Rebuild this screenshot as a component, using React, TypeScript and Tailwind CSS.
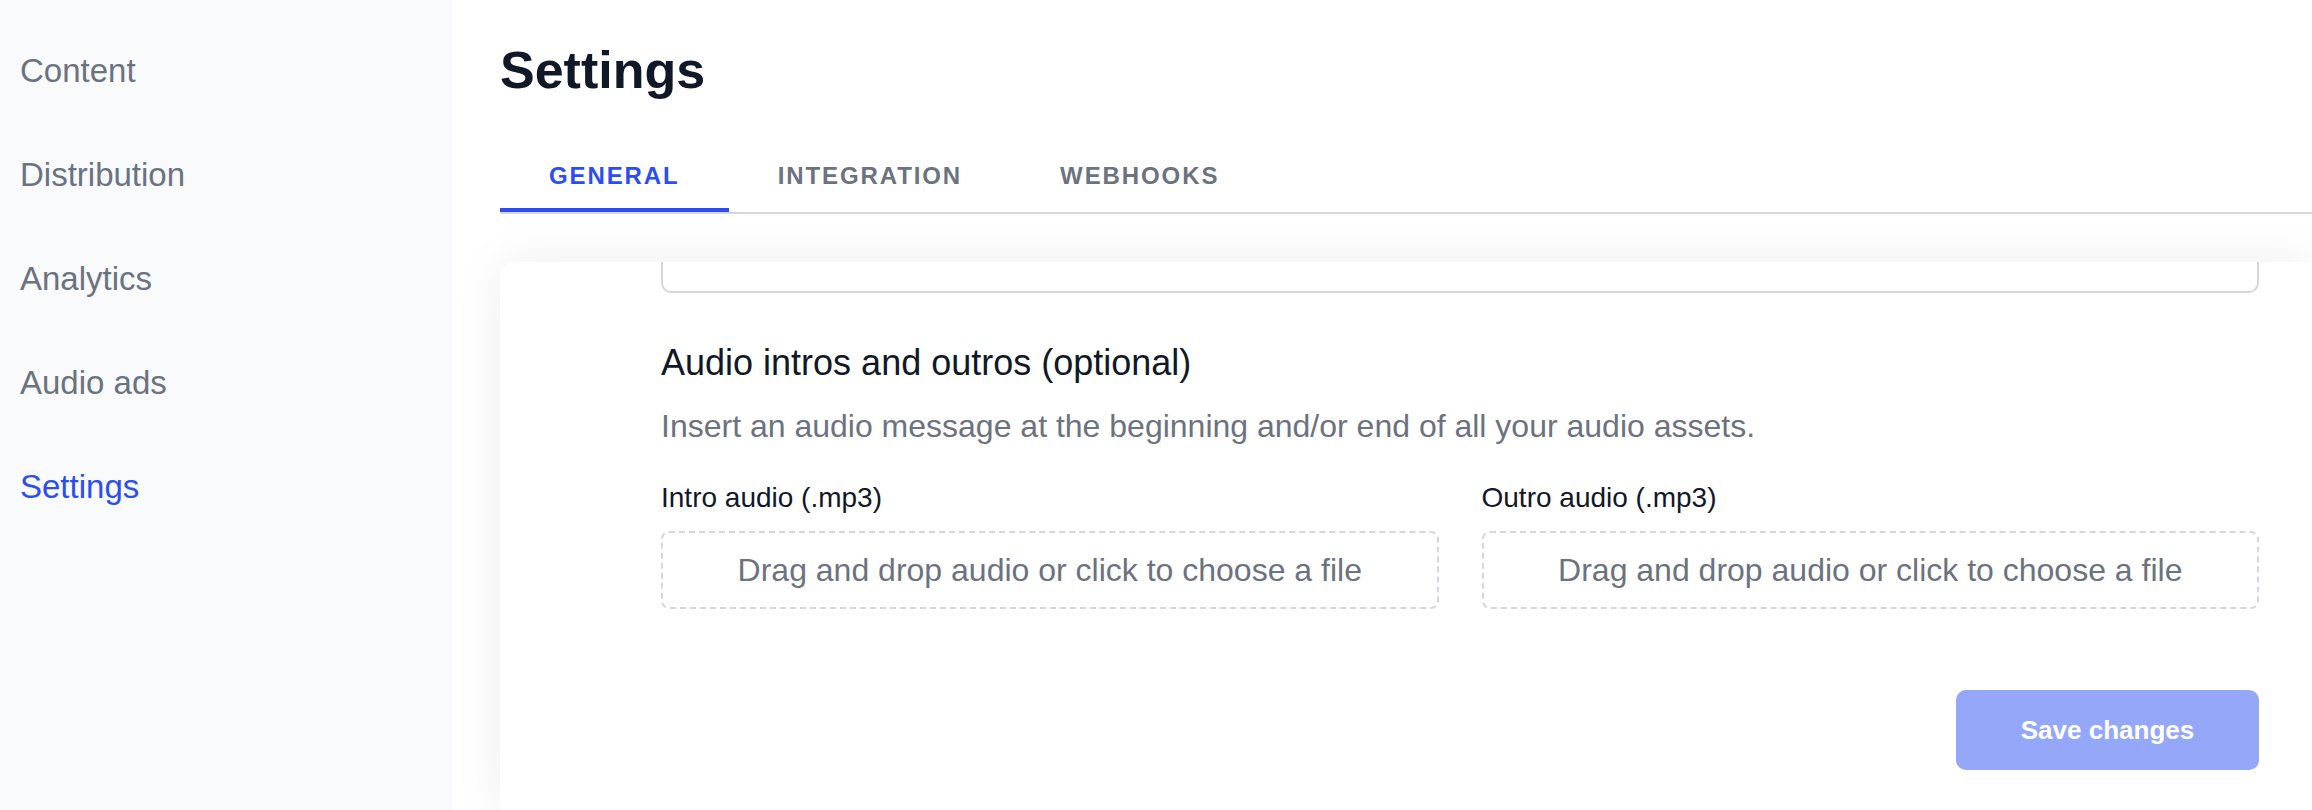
import React from "react";

const navItems = ["Content", "Distribution", "Analytics", "Audio ads", "Settings"];
const tabs = ["GENERAL", "INTEGRATION", "WEBHOOKS"];

function DropZone({ label }: { label: string }) {
  return (
    <div className="flex flex-col">
      <label className="text-[28px] leading-[36px] text-[#111827]">{label}</label>
      <div className="mt-[15px] flex h-[78px] cursor-pointer items-center justify-center rounded-lg border-2 border-dashed border-[#d6d7dc] text-[32px] leading-[40px] text-[#6b7280]">
        Drag and drop audio or click to choose a file
      </div>
    </div>
  );
}

export default function App() {
  return (
    <div className="flex h-[810px] w-[2312px] overflow-hidden bg-white font-['Liberation_Sans',Arial,sans-serif]">
      <aside className="relative z-10 h-full w-[452px] shrink-0 bg-[#f9fafb]">
        <nav className="flex flex-col gap-[64px] pl-[20px] pt-[51px]">
          {navItems.map((item) => (
            <a
              key={item}
              className={
                item === "Settings"
                  ? "h-10 text-[33px] leading-[40px] text-[#2c4df2]"
                  : "h-10 text-[33px] leading-[40px] text-[#6b7280]"
              }
            >
              {item}
            </a>
          ))}
        </nav>
      </aside>

      <main className="flex min-w-0 flex-1 flex-col pl-[48px]">
        <div className="pt-[43px]">
          <h1 className="text-[52px] font-bold leading-[54px] text-[#111827]">Settings</h1>
        </div>

        <div className="mt-[43px] flex border-b-2 border-[#d6d7dc]">
          {tabs.map((tab, i) => (
            <button
              key={tab}
              className={
                i === 0
                  ? "border-b-4 border-[#2c4df2] px-[49px] pb-[16px] pt-[20px] text-[24px] font-bold leading-[32px] tracking-[1.9px] text-[#2c4df2]"
                  : "border-b-4 border-transparent px-[49px] pb-[16px] pt-[20px] text-[24px] font-bold leading-[32px] tracking-[1.9px] text-[#6b7280]"
              }
            >
              {tab}
            </button>
          ))}
        </div>

        <section className="mt-[48px] flex-1 rounded-tl-2xl bg-white pl-[161px] pr-[53px] shadow-[0_0_50px_rgba(17,24,39,0.07)]">
          <div className="h-[31px] rounded-b-[10px] border-2 border-t-0 border-[#d6d7dc]" />

          <h2 className="mt-[48px] text-[36px] leading-[44px] text-[#111827]">
            Audio intros and outros (optional)
          </h2>
          <p className="mt-[21px] text-[32px] leading-[40px] text-[#6b7280]">
            Insert an audio message at the beginning and/or end of all your audio assets.
          </p>

          <div className="mt-[34px] grid grid-cols-2 gap-x-[43px]">
            <DropZone label="Intro audio (.mp3)" />
            <DropZone label="Outro audio (.mp3)" />
          </div>

          <div className="mt-[81px] flex justify-end">
            <button className="h-[80px] w-[303px] rounded-[10px] bg-[#94a7f8] text-[26px] font-bold text-white">
              Save changes
            </button>
          </div>
        </section>
      </main>
    </div>
  );
}
